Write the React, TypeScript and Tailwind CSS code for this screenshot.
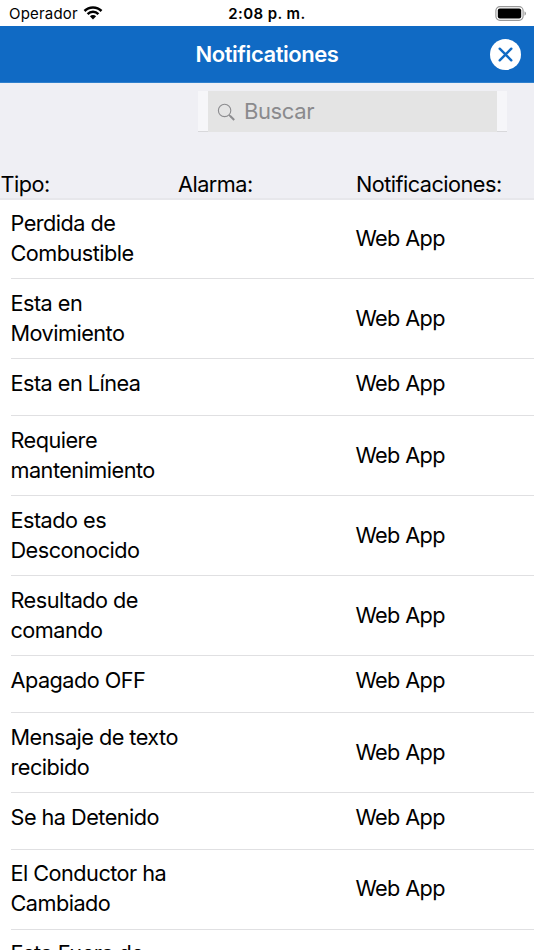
const rows: { lines: string[]; h: string }[] = [
  { lines: ['Perdida de', 'Combustible'], h: 'h-[79px]' },
  { lines: ['Esta en', 'Movimiento'], h: 'h-20' },
  { lines: ['Esta en Línea'], h: 'h-[57px] pb-[6px]' },
  { lines: ['Requiere', 'mantenimiento'], h: 'h-20' },
  { lines: ['Estado es', 'Desconocido'], h: 'h-20' },
  { lines: ['Resultado de', 'comando'], h: 'h-20' },
  { lines: ['Apagado OFF'], h: 'h-[57px] pb-[6px]' },
  { lines: ['Mensaje de texto', 'recibido'], h: 'h-20' },
  { lines: ['Se ha Detenido'], h: 'h-[57px] pb-[6px]' },
  { lines: ['El Conductor ha', 'Cambiado'], h: 'h-20 pb-[1px]' },
  { lines: ['Esta Fuera de', 'Línea'], h: 'h-20 pb-[2px]' },
];

function StatusBar() {
  return (
    <div className="flex h-[26px] items-center bg-white text-[15px] leading-[26px]">
      <div className="flex w-[178px] items-center pl-[9px] pt-[2px]">
        <span className="w-[74px] tracking-[0.2px]">Operador</span>
        <svg className="-mt-[3px]" width="20" height="15" viewBox="0 0 20 15">
          <path d="M0.6 5.1a13.2 13.2 0 0 1 18.8 0l-1.8 1.8a10.6 10.6 0 0 0-15.2 0z" />
          <path d="M3.7 8.2a8.9 8.9 0 0 1 12.6 0l-1.8 1.8a6.3 6.3 0 0 0-9 0z" />
          <path d="M6.9 11.3a4.4 4.4 0 0 1 6.2 0L10 14.4z" />
        </svg>
      </div>
      <div className="w-[178px] pt-[2px] text-center font-semibold tracking-[0.4px]">2:08 p. m.</div>
      <div className="flex w-[178px] justify-end pr-[7px]">
        <svg width="32" height="15" viewBox="0 0 32 15">
          <rect x="0.9" y="0.7" width="27.2" height="13.6" rx="4" fill="none" stroke="#999" strokeWidth="1.2" />
          <rect x="2.8" y="2.6" width="23.4" height="9.8" rx="2" />
          <path d="M29.5 5.2v4.6q1.5-.8 1.5-2.3t-1.5-2.3z" fill="#999" />
        </svg>
      </div>
    </div>
  );
}

export default function App() {
  return (
    <div className="h-[950px] w-[534px] overflow-hidden bg-white font-['Inter',sans-serif] text-black">
      <StatusBar />
      <header className="grid h-[57px] grid-cols-[60px_1fr_60px] items-center border-b border-[#2f80cd] bg-[#106ac4]">
        <h1 className="col-start-2 pt-px text-center text-[22px] font-semibold tracking-[-0.45px] text-white">Notificationes</h1>
        <button className="ml-4 h-[31px] w-[31px]" aria-label="Cerrar">
          <svg width="31" height="31" viewBox="0 0 31 31">
            <circle cx="15.5" cy="15.5" r="15.5" fill="white" />
            <path d="M9.7 9.7l11.6 11.6M21.3 9.7L9.7 21.3" stroke="#106ac4" strokeWidth="2.4" strokeLinecap="round" />
          </svg>
        </button>
      </header>
      <section className="h-[117px] border-b-2 border-[#e7e7eb] bg-[#efeff4] pt-2">
        <div className="ml-[198px] h-[41px] w-[309px] border-b border-[#d8d8db] bg-[#f6f6f9] px-[10px]">
          <div className="flex h-[41px] items-center bg-[#e4e4e4] pl-[9px] text-[22px] text-[#8a8a8d]">
            <svg width="20" height="20" viewBox="0 0 20 20" fill="none" stroke="#8c8c8f" strokeWidth="1.1">
              <circle cx="7.6" cy="8.4" r="6.2" />
              <path d="M12 13l2 2" />
              <path d="M13 13.8l4.2 4.2" strokeWidth="2" />
            </svg>
            <span className="ml-[7px] tracking-[-0.4px]">Buscar</span>
          </div>
        </div>
        <div className="mt-[38px] grid grid-cols-3 text-[21.7px] leading-[29px] tracking-[-0.53px]">
          <span className="pl-[0.5px]">Tipo:</span><span>Alarma:</span><span>Notificaciones:</span>
        </div>
      </section>
      <main className="text-[21.7px] leading-[29.7px] tracking-[-0.53px]">
        {rows.map((r) => (
          <div key={r.lines[0]} className="pl-[11px]">
            <div className={`flex items-center border-b border-[#e0e0e2] ${r.h}`}>
              <div className="-ml-[0.5px] w-[345px]">{r.lines.map((l) => <div key={l}>{l}</div>)}</div>
              <div className="tracking-[-0.65px]">Web App</div>
            </div>
          </div>
        ))}
      </main>
    </div>
  );
}
